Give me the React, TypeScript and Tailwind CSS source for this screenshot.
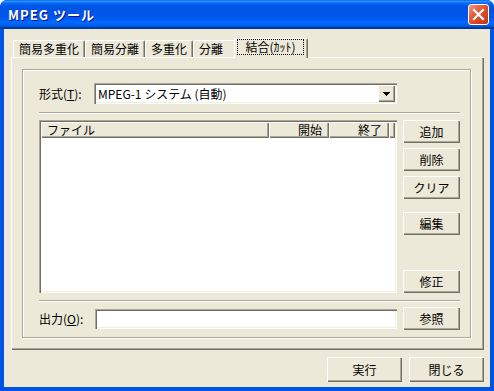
import type { ReactNode } from 'react'

const raised = 'bg-[#ECE9D8] shadow-[inset_1px_1px_0_#fff,inset_-1px_-1px_0_#716F64,inset_-2px_-2px_0_#ACA899]'
const sunken = 'bg-white shadow-[inset_1px_1px_0_#ACA899,inset_2px_2px_0_#716F64,inset_-1px_-1px_0_#fff,inset_-2px_-2px_0_#F1EFE2]'

function Button({ className, children }: { className: string; children: ReactNode }) {
	return <div className={`flex items-center justify-center ${raised} ${className}`}>{children}</div>
}

function Tab({ className, children }: { className: string; children: ReactNode }) {
	return (
		<div
			className={`flex h-[17px] items-center rounded-t-[2px] border-l border-t border-r border-white border-r-[#716F64] pl-[5px] shadow-[inset_-1px_0_0_#ACA899] ${className}`}
		>
			{children}
		</div>
	)
}

function Separator() {
	return <div className="h-[2px] w-[421px] border-t border-b border-t-[#ACA899] border-b-white" />
}

export default function App() {
	return (
		<div className="h-[391px] w-[494px] bg-white font-['Noto_Sans_CJK_JP',sans-serif]">
			<div className="flex h-full flex-col rounded-t-[7px] bg-[#0054E3]">
				{/* Title bar */}
				<div className="flex h-[29px] items-center rounded-t-[7px] bg-[linear-gradient(180deg,#0058EE_0%,#3593FF_4%,#288EFF_6%,#127DFF_8%,#036FFC_10%,#0262EE_14%,#0057E5_20%,#0054E3_24%,#0055EB_56%,#005BF5_66%,#026AFE_76%,#0062EF_86%,#0052D6_92%,#0040AB_94%,#003092_100%)] pl-[8px] pr-[5px]">
					<span className="text-[13px] font-bold tracking-[1px] text-white [text-shadow:1px_1px_#0F1089]">
						MPEG ツール
					</span>
					<div className="ml-auto flex h-[21px] w-[21px] items-center justify-center rounded-[3px] border border-white bg-[linear-gradient(135deg,#F39C84_0%,#E5603E_35%,#D9441F_65%,#C2340F_100%)]">
						<svg width="13" height="13" viewBox="0 0 13 13">
							<path d="M2 2 L11 11 M11 2 L2 11" stroke="#fff" strokeWidth="2.2" strokeLinecap="square" />
						</svg>
					</div>
				</div>

				{/* Body */}
				<div className="mx-[4px] mb-[4px] flex flex-1 flex-col bg-[#ECE9D8] text-[12px] leading-none text-black">
					{/* Tabs */}
					<div className="ml-[9px] mt-[9px] flex h-[19px] items-end">
						<Tab className="w-[72px]">簡易多重化</Tab>
						<Tab className="w-[60px]">簡易分離</Tab>
						<Tab className="w-[48px]">多重化</Tab>
						<Tab className="w-[43px]">分離</Tab>
						<div className="relative z-10 -mb-px -ml-[2px] flex h-[20px] w-[74px] flex-col rounded-t-[2px] border-l border-t border-r border-white border-r-[#716F64] bg-[#ECE9D8] pl-[2px] shadow-[inset_-1px_0_0_#ACA899]">
							<span className="flex h-[16px] w-[67px] items-center justify-center border border-dotted border-black">
								結合(ｶｯﾄ)
							</span>
						</div>
					</div>

					{/* Tab panel */}
					<div className="ml-[7px] h-[293px] w-[473px] pl-[11px] pt-[12px] shadow-[inset_1px_1px_0_#fff,inset_-1px_-1px_0_#716F64,inset_-2px_-2px_0_#ACA899]">
						<div className="h-[269px] w-[449px] border border-[#ACA899] pl-[16px] pt-[13px] shadow-[inset_1px_1px_0_#fff,1px_1px_0_#fff]">
							{/* Format row */}
							<div className="flex h-[21px] items-center">
								<span className="w-[55px]">
									形式(<span className="underline">T</span>):
								</span>
								<div className={`flex h-[21px] w-[303px] items-center pl-[4px] ${sunken}`}>
									<span>MPEG-1 システム (自動)</span>
									<div className={`ml-auto mr-[2px] flex h-[17px] w-[17px] items-center justify-center ${raised}`}>
										<svg width="7" height="4" viewBox="0 0 7 4" shapeRendering="crispEdges">
											<rect x="0" y="0" width="7" height="1" fill="#000" />
											<rect x="1" y="1" width="5" height="1" fill="#000" />
											<rect x="2" y="2" width="3" height="1" fill="#000" />
											<rect x="3" y="3" width="1" height="1" fill="#000" />
										</svg>
									</div>
								</div>
							</div>

							<div className="mt-[8px]">
								<Separator />
							</div>

							{/* File list + actions */}
							<div className="mt-[6px] flex">
								<div className={`flex h-[173px] w-[358px] flex-col p-[2px] ${sunken}`}>
									<div className="flex h-[16px]">
										<div className={`flex w-[228px] items-center pl-[6px] ${raised}`}>ファイル</div>
										<div className={`flex w-[60px] items-center justify-end pr-[7px] ${raised}`}>開始</div>
										<div className={`flex w-[60px] items-center justify-end pr-[7px] ${raised}`}>終了</div>
										<div className={`flex-1 ${raised}`} />
									</div>
								</div>
								<div className="ml-[6px] flex w-[57px] flex-col">
									<Button className="h-[23px]">追加</Button>
									<Button className="mt-[5px] h-[23px]">削除</Button>
									<Button className="mt-[5px] h-[23px]">クリア</Button>
									<Button className="mt-[13px] h-[23px]">編集</Button>
									<Button className="mt-auto h-[23px]">修正</Button>
								</div>
							</div>

							<div className="mt-[7px]">
								<Separator />
							</div>

							{/* Output row */}
							<div className="mt-[5px] flex h-[23px] items-center">
								<span className="w-[56px]">
									出力(<span className="underline">O</span>):
								</span>
								<div className={`h-[20px] w-[302px] ${sunken}`} />
								<Button className="ml-[6px] h-[23px] w-[57px]">参照</Button>
							</div>
						</div>
					</div>

					{/* Dialog buttons */}
					<div className="mt-[7px] flex justify-end gap-[7px] pr-[6px]">
						<Button className="h-[25px] w-[75px]">実行</Button>
						<Button className="h-[25px] w-[75px]">閉じる</Button>
					</div>
				</div>
			</div>
		</div>
	)
}
